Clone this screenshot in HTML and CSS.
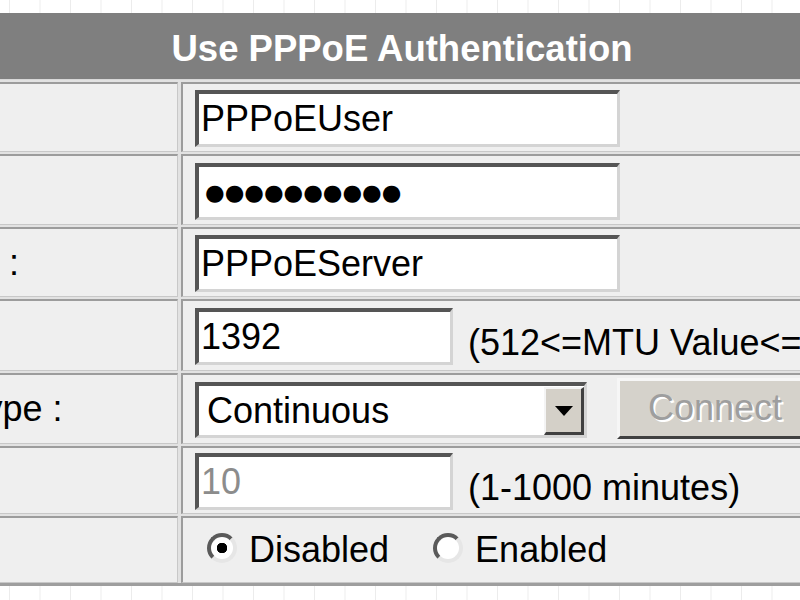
FILE: index.html
```html
<!DOCTYPE html>
<html>
<head>
<meta charset="utf-8">
<title>PPPoE</title>
<link rel="stylesheet" href="styles.css">
</head>
<body>
<div class="panel">
  <div class="head">Use PPPoE Authentication</div>

  <div class="lbl">User Name :</div>
  <div class="val"><input class="field long" type="text" value="PPPoEUser"></div>

  <div class="lbl">Password :</div>
  <div class="val"><input class="field long pw" type="text" value="●●●●●●●●●●"></div>

  <div class="lbl">Service Name :</div>
  <div class="val"><input class="field long" type="text" value="PPPoEServer"></div>

  <div class="lbl">MTU :</div>
  <div class="val"><input class="field short" type="text" value="1392"><span class="hint">(512&lt;=MTU Value&lt;=1492)</span></div>

  <div class="lbl">Connection Type :</div>
  <div class="val">
    <div class="select">
      <select><option>Continuous</option><option>Connect on Demand</option><option>Manual</option></select>
      <span class="arrow"></span>
    </div>
    <button class="btn" type="button" disabled>Connect</button>
  </div>

  <div class="lbl">Idle Time :</div>
  <div class="val"><input class="field short" type="text" value="10" disabled><span class="hint">(1-1000 minutes)</span></div>

  <div class="lbl">Bridge :</div>
  <div class="val">
    <label class="opt"><input type="radio" name="bridge" checked>Disabled</label>
    <label class="opt second"><input type="radio" name="bridge">Enabled</label>
  </div>
</div>
</body>
</html>
```
FILE: styles.css
```css
html, body {
  margin: 0;
  padding: 0;
}

body {
  width: 800px;
  height: 600px;
  overflow: hidden;
  background-color: #fff;
  background-image: linear-gradient(90deg, #ececec 1px, transparent 1px);
  background-size: 30.5px 100%;
  background-position: 9px 0;
  font-family: "Liberation Sans", Arial, sans-serif;
}

.panel {
  margin: 13px 0 0 -229px;
  width: 1262px;
  display: grid;
  grid-template-columns: 407px 1fr;
  grid-template-rows: 67px 70px 71px 70px 72px 71px 68px 67px;
  gap: 2px 3px;
  background: #e2e2e2;
  border-bottom: 3px solid #9e9e9e;
  font-size: 36px;
  color: #000;
}

.head {
  grid-column: 1 / -1;
  background: #7f7f7f;
  border-bottom: 1px solid #d8d8d8;
  color: #fff;
  font-weight: bold;
  font-size: 36.5px;
  display: flex;
  align-items: center;
  justify-content: center;
  padding-top: 6px;
  box-sizing: border-box;
}

.lbl,
.val {
  box-sizing: border-box;
  background: #efefef;
  border-style: solid;
  border-width: 2px 1px 1px 2px;
  border-color: #9c9c9c #c8c8c8 #c8c8c8 #9c9c9c;
  display: flex;
  align-items: center;
  white-space: nowrap;
  overflow: hidden;
}

.lbl {
  padding-left: 0;
}

.val {
  padding-left: 12px;
}

.field {
  box-sizing: border-box;
  height: 57px;
  margin: 2px 0 0 0;
  padding: 0 2px;
  border-style: solid;
  border-width: 4px 3px 3px 4px;
  border-color: #555 #d4d4d4 #d4d4d4 #555;
  background: #fff;
  font-family: "Liberation Sans", Arial, sans-serif;
  font-size: 36px;
  color: #000;
  outline: none;
}

.long {
  width: 425px;
}

.short {
  width: 258px;
}

.pw {
  font-family: "DejaVu Sans", sans-serif;
  font-size: 22.5px;
  padding-left: 6px;
}

.field:disabled {
  background: #fff;
  color: #8c8c8c;
}

.hint {
  margin: 14px 0 0 15px;
}

.select {
  box-sizing: border-box;
  display: flex;
  width: 392px;
  height: 56px;
  margin-top: 2px;
  border-style: solid;
  border-width: 4px 3px 3px 4px;
  border-color: #555 #d4d4d4 #d4d4d4 #555;
  background: #fff;
}

.select select {
  -webkit-appearance: none;
  appearance: none;
  flex: 1;
  min-width: 0;
  height: 100%;
  margin: 0;
  padding: 0 0 0 8px;
  border: 0;
  background: transparent;
  font-family: "Liberation Sans", Arial, sans-serif;
  font-size: 36px;
  color: #000;
  outline: none;
}

.arrow {
  box-sizing: border-box;
  width: 40px;
  margin: 1px 0 0 0;
  background: #d4d0c8;
  border-style: solid;
  border-width: 2px 3px 3px 2px;
  border-color: #f4f4f4 #404040 #404040 #f4f4f4;
  display: flex;
  align-items: center;
  justify-content: center;
}

.arrow::before {
  content: "";
  border-left: 9px solid transparent;
  border-right: 9px solid transparent;
  border-top: 10px solid #000;
}

.btn {
  box-sizing: border-box;
  margin: 0 0 2px 30px;
  height: 61px;
  padding: 0 30px 0 28px;
  font-family: "Liberation Sans", Arial, sans-serif;
  font-size: 36px;
  color: #9e9e9e;
  background: #d5d2cb;
  border-style: solid;
  border-width: 3px;
  border-color: #f6f6f6 #404040 #404040 #f6f6f6;
  text-shadow: 2px 2px 0 #fff;
}

.opt {
  display: flex;
  align-items: center;
  margin-left: 12px;
}

.opt.second {
  margin-left: 44px;
}

.opt input {
  -webkit-appearance: none;
  appearance: none;
  box-sizing: border-box;
  width: 30px;
  height: 30px;
  margin: 0 12px 4px 0;
  border-radius: 50%;
  border: 4px solid;
  border-color: #5a5a5a #e6e6e6 #e6e6e6 #5a5a5a;
  background: #fff;
}

.opt.second input {
  margin-right: 12px;
}

.opt input:checked {
  background: radial-gradient(circle, #000 0 5px, #fff 5.5px);
}
```
